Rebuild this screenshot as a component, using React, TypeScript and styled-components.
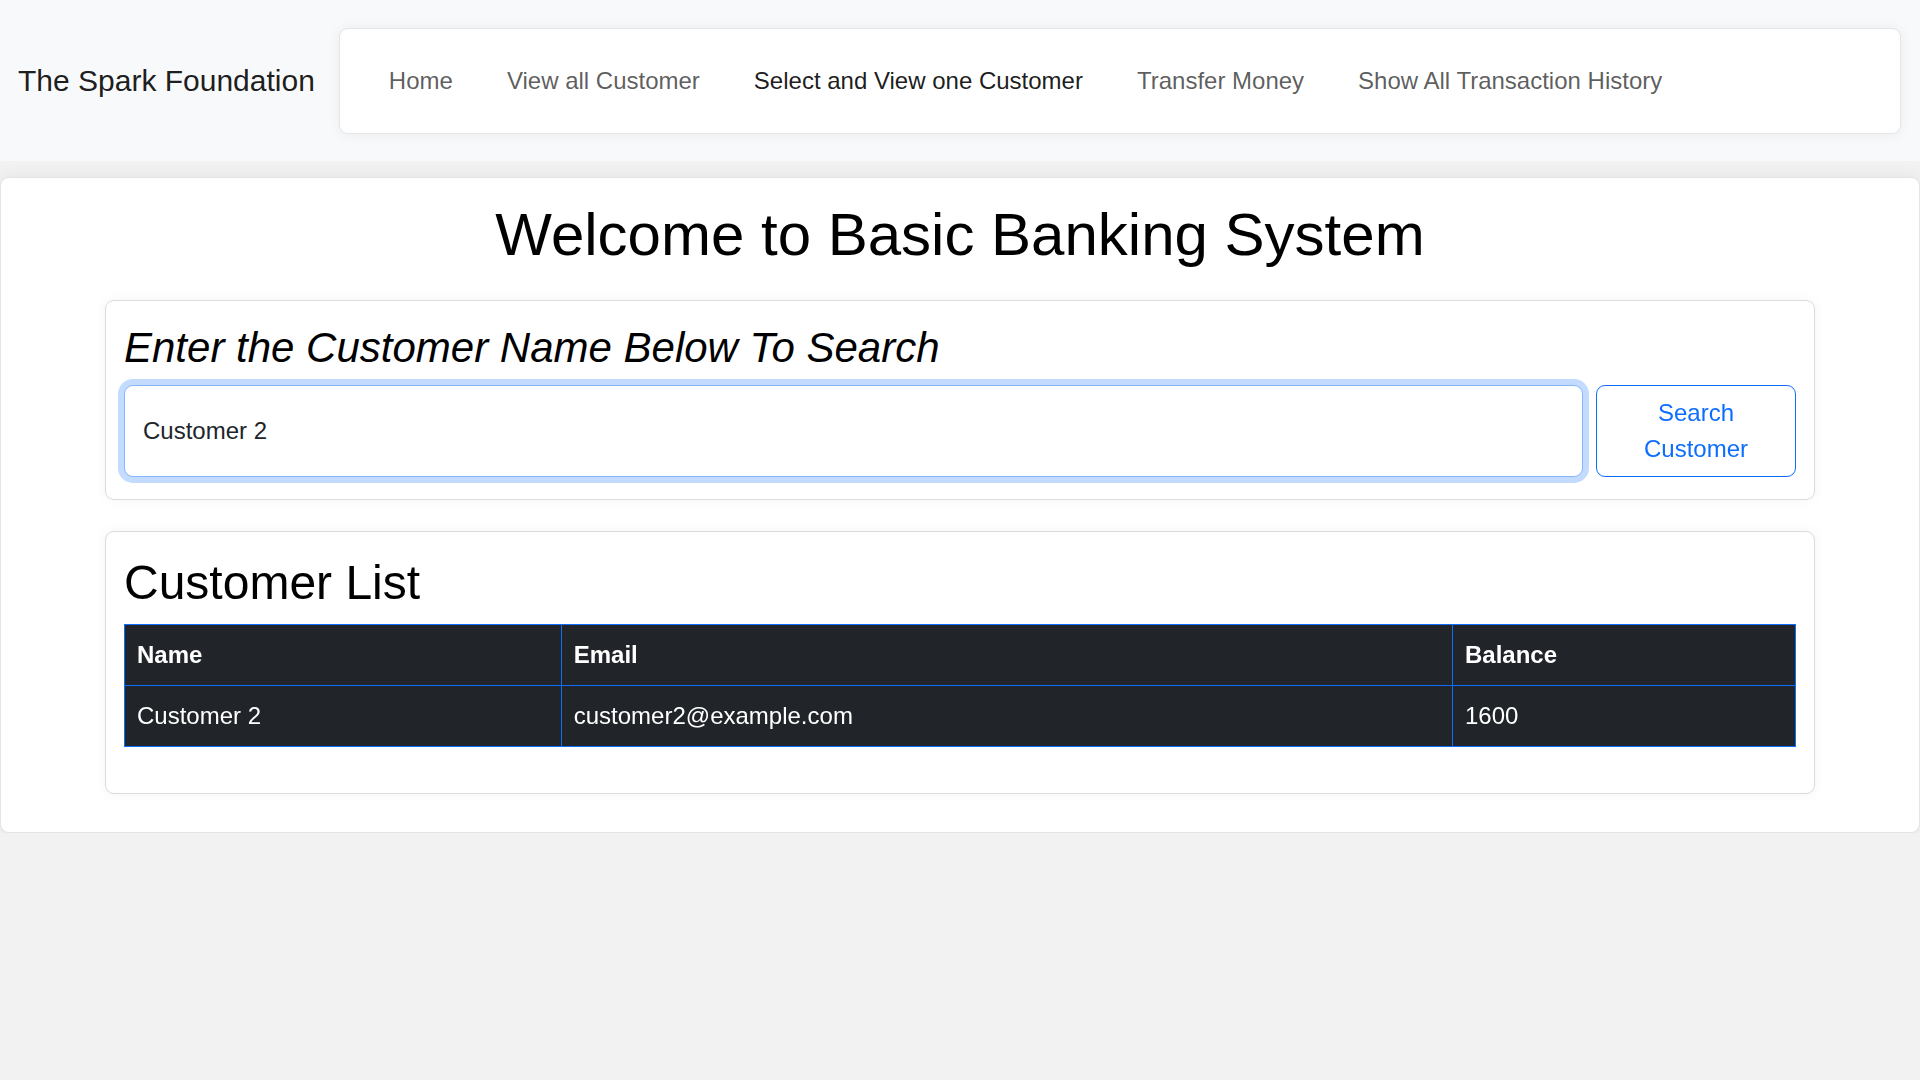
import React, { useEffect, useRef, useState } from "react";
import styled, { createGlobalStyle } from "styled-components";

const GlobalStyle = createGlobalStyle`
  * { box-sizing: border-box; }
  body {
    margin: 0;
    background: #f2f2f2;
    font-family: "Liberation Sans", Arial, sans-serif;
    font-size: 24px;
    line-height: 1.5;
    color: #212529;
  }
`;

// header / navbar
const Header = styled.header`
  display: flex;
  align-items: center;
  height: 161px;
  padding: 0 19px 0 18px;
  background: #f8f9fa;
`;

const Brand = styled.a`
  font-size: 30px;
  line-height: 1.5;
  color: rgba(0, 0, 0, 0.9);
  text-decoration: none;
  margin-right: 24px;
  white-space: nowrap;
`;

const NavCard = styled.nav`
  flex: 1;
  display: flex;
  align-items: center;
  height: 106px;
  padding-left: 22px;
  background: #fff;
  border: 1px solid rgba(0, 0, 0, 0.1);
  border-radius: 9px;
  box-shadow: 0 0 14px rgba(0, 0, 0, 0.06);
`;

const NavLink = styled.a<{ $active?: boolean }>`
  padding: 0 27px;
  font-size: 24px;
  line-height: 36px;
  text-decoration: none;
  white-space: nowrap;
  color: ${(p) => (p.$active ? "rgba(0, 0, 0, 0.9)" : "rgba(0, 0, 0, 0.65)")};
`;

// main area
const MainCard = styled.main`
  margin-top: 16px;
  padding: 21px 0 38px;
  background: #fff;
  border: 1px solid rgba(0, 0, 0, 0.1);
  border-radius: 9px;
  box-shadow: 0 0 18px rgba(0, 0, 0, 0.07);
`;

const Title = styled.h1`
  margin: 0 0 29px;
  text-align: center;
  font-size: 60px;
  font-weight: 400;
  line-height: 1.2;
  color: #000;
`;

const Card = styled.section<{ $gap?: number }>`
  width: 1710px;
  margin: 0 auto ${(p) => p.$gap ?? 0}px;
  padding: 22px 18px 22px;
  background: #fff;
  border: 1px solid #dcdcdc;
  border-radius: 9px;
  box-shadow: 0 0 12px rgba(0, 0, 0, 0.05);
`;

const SearchHeading = styled.h3`
  margin: 0 0 12px;
  font-size: 42px;
  font-weight: 400;
  font-style: italic;
  line-height: 1.2;
  color: #000;
`;

const ListHeading = styled.h2`
  margin: 0 0 12px;
  font-size: 48px;
  font-weight: 400;
  line-height: 1.2;
  color: #000;
`;

const SearchRow = styled.div`
  display: flex;
  gap: 13px;
`;

const SearchInput = styled.input`
  flex: 1;
  min-width: 0;
  padding: 9px 18px;
  font: inherit;
  color: #212529;
  caret-color: #000;
  background: #fff;
  border: 1px solid #86b7fe;
  border-radius: 9px;
  outline: none;
  box-shadow: 0 0 0 6px rgba(13, 110, 253, 0.25);
`;

const OutlineButton = styled.button`
  width: 200px;
  flex: none;
  padding: 9px 18px;
  font: inherit;
  line-height: 36px;
  color: #0d6efd;
  background: transparent;
  border: 1px solid #0d6efd;
  border-radius: 9px;
  cursor: pointer;
`;

const Table = styled.table`
  width: 100%;
  margin-bottom: 24px;
  border-collapse: collapse;
  background: #212529;
  color: #fff;
  border: 1px solid #0d6efd;
`;

const Th = styled.th`
  padding: 12px;
  text-align: left;
  font-weight: 700;
  border: 1px solid #0d6efd;
`;

const Td = styled.td`
  padding: 12px;
  border: 1px solid #0d6efd;
`;

const links = [
  "Home",
  "View all Customer",
  "Select and View one Customer",
  "Transfer Money",
  "Show All Transaction History",
];

const customers = [
  { name: "Customer 2", email: "customer2@example.com", balance: 1600 },
];

const App = () => {
  const [query, setQuery] = useState("Customer 2");
  const inputRef = useRef<HTMLInputElement>(null);

  useEffect(() => {
    const el = inputRef.current;
    if (el) {
      el.focus();
      el.setSelectionRange(el.value.length, el.value.length);
    }
  }, []);

  return (
    <>
      <GlobalStyle />
      <Header>
        <Brand href="#">The Spark Foundation</Brand>
        <NavCard>
          {links.map((l) => (
            <NavLink key={l} href="#" $active={l === "Select and View one Customer"}>
              {l}
            </NavLink>
          ))}
        </NavCard>
      </Header>

      <MainCard>
        <Title>Welcome to Basic Banking System</Title>

        {/* 검색 */}
        <Card $gap={31}>
          <SearchHeading>Enter the Customer Name Below To Search</SearchHeading>
          <SearchRow>
            <SearchInput
              ref={inputRef}
              value={query}
              onChange={(e) => setQuery(e.target.value)}
            />
            <OutlineButton>Search Customer</OutlineButton>
          </SearchRow>
        </Card>

        {/* 고객 목록 */}
        <Card>
          <ListHeading>Customer List</ListHeading>
          <Table>
            <thead>
              <tr>
                <Th>Name</Th>
                <Th>Email</Th>
                <Th>Balance</Th>
              </tr>
            </thead>
            <tbody>
              {customers.map((c) => (
                <tr key={c.email}>
                  <Td>{c.name}</Td>
                  <Td>{c.email}</Td>
                  <Td>{c.balance}</Td>
                </tr>
              ))}
            </tbody>
          </Table>
        </Card>
      </MainCard>
    </>
  );
};

export default App;
